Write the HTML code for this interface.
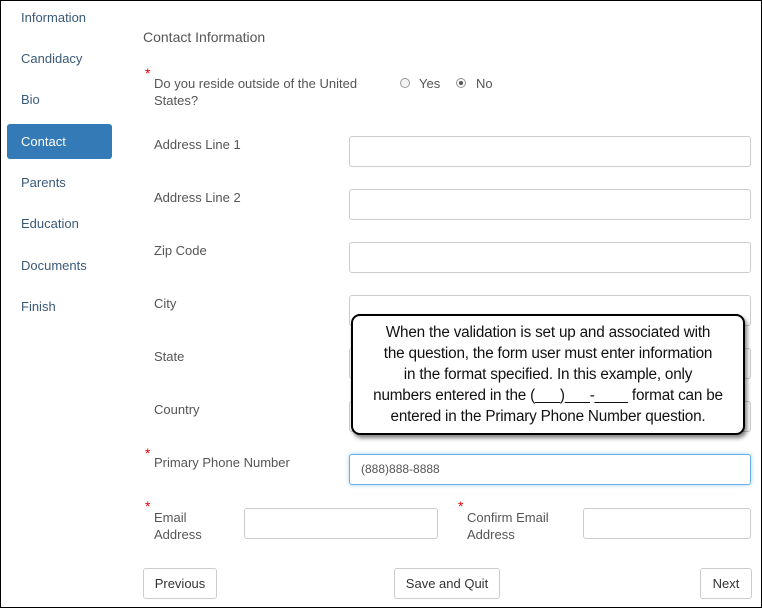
<!DOCTYPE html>
<html><head><style>
body{margin:0;width:762px;height:608px;overflow:hidden;font-family:"Liberation Sans",sans-serif;font-size:13px;color:#555;position:relative}
.frame{position:absolute;left:0;top:0;width:760px;height:606px;border:1px solid #000}
.a{position:absolute}
.nav{left:21px;font-size:13px;color:#3a5a78}
.act{left:7px;top:124px;width:105px;height:35px;background:#337ab7;border-radius:3px;color:#fff}
.lbl{position:absolute;left:154px;font-size:13px;color:#555}
.in{position:absolute;left:349px;width:400px;height:29px;border:1px solid #ccc;border-radius:3px;background:#fff}
.star{position:absolute;color:#e00;font-size:14px}
.btn{position:absolute;top:568px;height:29px;border:1px solid #ccc;border-radius:3px;font-size:13px;color:#333;text-align:center;line-height:29px;background:#fff}
.rad{position:absolute;width:8px;height:8px;border:1px solid #999;border-radius:50%;top:78px;background:#f4f4f4}
</style></head><body><div class="frame"></div>
<div class="a nav" style="top:10px">Information</div>
<div class="a nav" style="top:51px">Candidacy</div>
<div class="a nav" style="top:92px">Bio</div>
<div class="a act"></div><div class="a nav" style="top:134px;color:#fff">Contact</div>
<div class="a nav" style="top:175px">Parents</div>
<div class="a nav" style="top:216px">Education</div>
<div class="a nav" style="top:258px">Documents</div>
<div class="a nav" style="top:299px">Finish</div>

<div class="a" style="left:143px;top:29px;font-size:14px;color:#555">Contact Information</div>
<div class="star" style="left:145px;top:65px">*</div>
<div class="lbl" style="top:75px;line-height:17px">Do you reside outside of the United<br>States?</div>
<div class="rad" style="left:400px"></div><div class="a" style="left:419px;top:76px">Yes</div>
<div class="rad" style="left:456px"><div style="width:4px;height:4px;background:#555;border-radius:50%;margin:2px"></div></div><div class="a" style="left:476px;top:76px">No</div>

<div class="lbl" style="top:137px">Address Line 1</div><div class="in" style="top:136px"></div>
<div class="lbl" style="top:190px">Address Line 2</div><div class="in" style="top:189px"></div>
<div class="lbl" style="top:243px">Zip Code</div><div class="in" style="top:242px"></div>
<div class="lbl" style="top:296px">City</div><div class="in" style="top:295px"></div>
<div class="lbl" style="top:349px">State</div><div class="in" style="top:348px"></div>
<div class="lbl" style="top:402px">Country</div><div class="in" style="top:401px"></div>
<div class="star" style="left:145px;top:445px">*</div>
<div class="lbl" style="top:455px">Primary Phone Number</div>
<div class="in" style="top:454px;border-color:#66afe9;box-shadow:0 0 4px rgba(102,175,233,.6)"><span style="position:absolute;left:11px;top:7px;font-size:12px;color:#555">(888)888-8888</span></div>
<div class="star" style="left:145px;top:498px">*</div>
<div class="lbl" style="top:509px;line-height:17px">Email<br>Address</div>
<div class="in" style="top:508px;left:244px;width:192px"></div>
<div class="star" style="left:458px;top:498px">*</div>
<div class="lbl" style="left:467px;top:509px;line-height:17px">Confirm Email<br>Address</div>
<div class="in" style="top:508px;left:583px;width:166px"></div>

<div class="btn" style="left:143px;width:72px">Previous</div>
<div class="btn" style="left:394px;width:104px">Save and Quit</div>
<div class="btn" style="left:700px;width:50px">Next</div>

<div class="a" style="left:351px;top:314px;width:390px;border:2px solid #000;border-radius:9px;background:#fff;box-shadow:2px 3px 4px rgba(0,0,0,.5);font-size:15.3px;letter-spacing:-0.2px;color:#111;text-align:center;line-height:21px;padding-top:6px;height:111px;white-space:nowrap">When the validation is set up and associated with<br>the question, the form user must enter information<br>in the format specified. In this example, only<br>numbers entered in the (___)___-____ format can be<br>entered in the Primary Phone Number question.</div>
</body></html>
